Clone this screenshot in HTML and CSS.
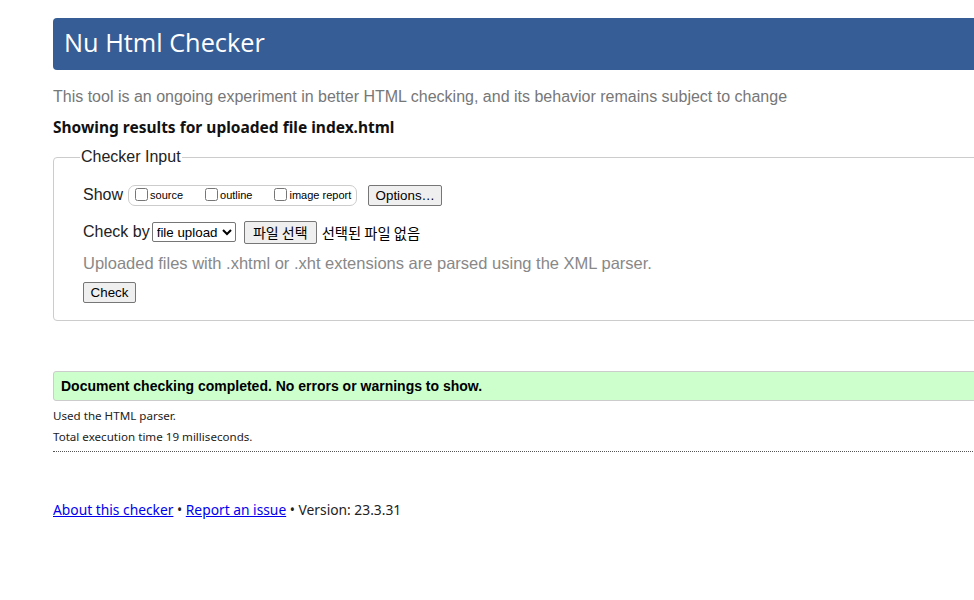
FILE: index.html
```html
<!DOCTYPE html>
<html lang="en">
<head>
<meta charset="utf-8">
<title>Nu Html Checker</title>
<link rel="stylesheet" href="styles.css">
</head>
<body>
<div class="page">
  <h1 class="banner">Nu Html Checker</h1>
  <p class="intro">This tool is an ongoing experiment in better HTML checking, and its behavior remains subject to change</p>
  <p class="results">Showing results for uploaded file index.html</p>
  <fieldset class="input">
    <legend class="legend">Checker Input</legend>
    <div class="row show-row">
      <span class="label">Show</span>
      <span class="opts">
        <label class="opt opt-gap"><input type="checkbox" class="cb">source</label>
        <label class="opt opt-gap"><input type="checkbox" class="cb">outline</label>
        <label class="opt"><input type="checkbox" class="cb">image report</label>
      </span>
      <button class="btn options">Options…</button>
    </div>
    <div class="row check-row">
      <span class="label">Check by</span>
      <select class="sel"><option>file upload</option></select>
      <span class="file">
        <button class="btn filebtn">파일 선택</button>
        <span class="nofile">선택된 파일 없음</span>
      </span>
    </div>
    <p class="hint">Uploaded files with .xhtml or .xht extensions are parsed using the XML parser.</p>
    <button class="btn check">Check</button>
  </fieldset>
  <div class="success">Document checking completed. No errors or warnings to show.</div>
  <p class="meta">Used the HTML parser.</p>
  <p class="meta">Total execution time 19 milliseconds.</p>
  <hr class="sep">
  <p class="footer"><a href="#">About this checker</a> • <a href="#">Report an issue</a> • Version: 23.3.31</p>
</div>
</body>
</html>
```
FILE: styles.css
```css
html, body {
  margin: 0;
  padding: 0;
  overflow: hidden;
  background: #fff;
}
.page {
  width: 960px;
  margin-left: 53px;
  padding-top: 18px;
  font-family: "Liberation Sans", Arial, sans-serif;
  color: #000;
}
.banner {
  margin: 0;
  height: 52px;
  box-sizing: border-box;
  padding-left: 11px;
  background: #365d95;
  color: #fff;
  border-radius: 4px;
  font-family: "Open Sans", "Noto Sans", sans-serif;
  font-weight: 400;
  font-size: 25.3px;
  line-height: 49px;
}
.intro {
  margin: 17px 0 0;
  color: #777;
  font-size: 16px;
  line-height: 20px;
}
.results {
  margin: 10px 0 0;
  font-family: "Noto Sans", "Open Sans", sans-serif;
  font-weight: 700;
  font-size: 15.5px;
  line-height: 20px;
  color: #111;
}
.input {
  margin: 11px 0 0;
  padding: 18px 29px 17px 29px;
  border: 1px solid #ccc;
  border-radius: 4px;
  min-inline-size: 0;
}
.legend {
  padding: 0 1px;
  margin-left: -3px;
  font-size: 16px;
  color: #222;
}
.row {
  display: flex;
  align-items: center;
}
.label {
  font-size: 16px;
  color: #222;
}
.show-row {
  height: 22px;
}
.opts {
  display: inline-flex;
  align-items: center;
  margin-left: 5px;
  height: 21px;
  box-sizing: border-box;
  padding: 0 5px 0 2px;
  border: 1px solid #ccc;
  border-radius: 7px;
}
.opt {
  display: inline-flex;
  align-items: center;
  font-size: 11px;
  color: #000;
}
.opt-gap { margin-right: 18px; }
.cb {
  width: 13px;
  height: 13px;
  margin: 0 2px 2px 4px;
}
.btn {
  font-family: "Liberation Sans", Arial, sans-serif;
  font-size: 13.33px;
  color: #000;
  background: #efefef;
  border: 1px solid #767676;
  border-radius: 2px;
  height: 21px;
  padding: 0 6px;
  line-height: 19px;
}
.options {
  margin-left: 11px;
  width: 74px;
  padding: 0;
}
.check-row {
  margin-top: 15px;
  height: 22px;
}
.sel {
  margin-left: 2px;
  height: 20px;
  font-family: "Liberation Sans", Arial, sans-serif;
  font-size: 13.33px;
  width: 84px;
  border: 1px solid #767676;
  border-radius: 2px;
  background: #fff;
  color: #000;
}
.file {
  display: inline-flex;
  align-items: center;
  margin-left: 8px;
}
.filebtn {
  font-family: "Noto Sans CJK KR", sans-serif;
  font-size: 14px;
  width: 73px;
  height: 23px;
  padding: 0;
}
.nofile {
  margin-left: 5px;
  font-family: "Noto Sans CJK KR", sans-serif;
  font-size: 14.3px;
  color: #000;
}
.hint {
  margin: 10px 0 0;
  color: #888;
  font-size: 16.5px;
  line-height: 20px;
}
.check {
  margin-top: 9px;
  width: 53px;
  padding: 0;
}
.success {
  margin-top: 50px;
  height: 30px;
  box-sizing: border-box;
  padding-left: 7px;
  background: #ccffcc;
  border: 1px solid #ccc;
  border-radius: 3px;
  font-weight: 700;
  font-size: 14px;
  line-height: 28px;
}
.meta {
  margin: 7px 0 0;
  font-family: "Noto Sans", "Open Sans", sans-serif;
  font-size: 11.6px;
  line-height: 16px;
  color: #222;
}
.meta + .meta {
  margin-top: 5px;
}
.sep {
  margin: 6px 0 0;
  border: 0;
  border-top: 1px dotted #555;
  height: 0;
}
.footer {
  margin: 49px 0 0;
  font-family: "Noto Sans", "Open Sans", sans-serif;
  font-size: 13.8px;
  line-height: 18px;
  color: #222;
}
.footer a {
  color: #0000ee;
}
```
